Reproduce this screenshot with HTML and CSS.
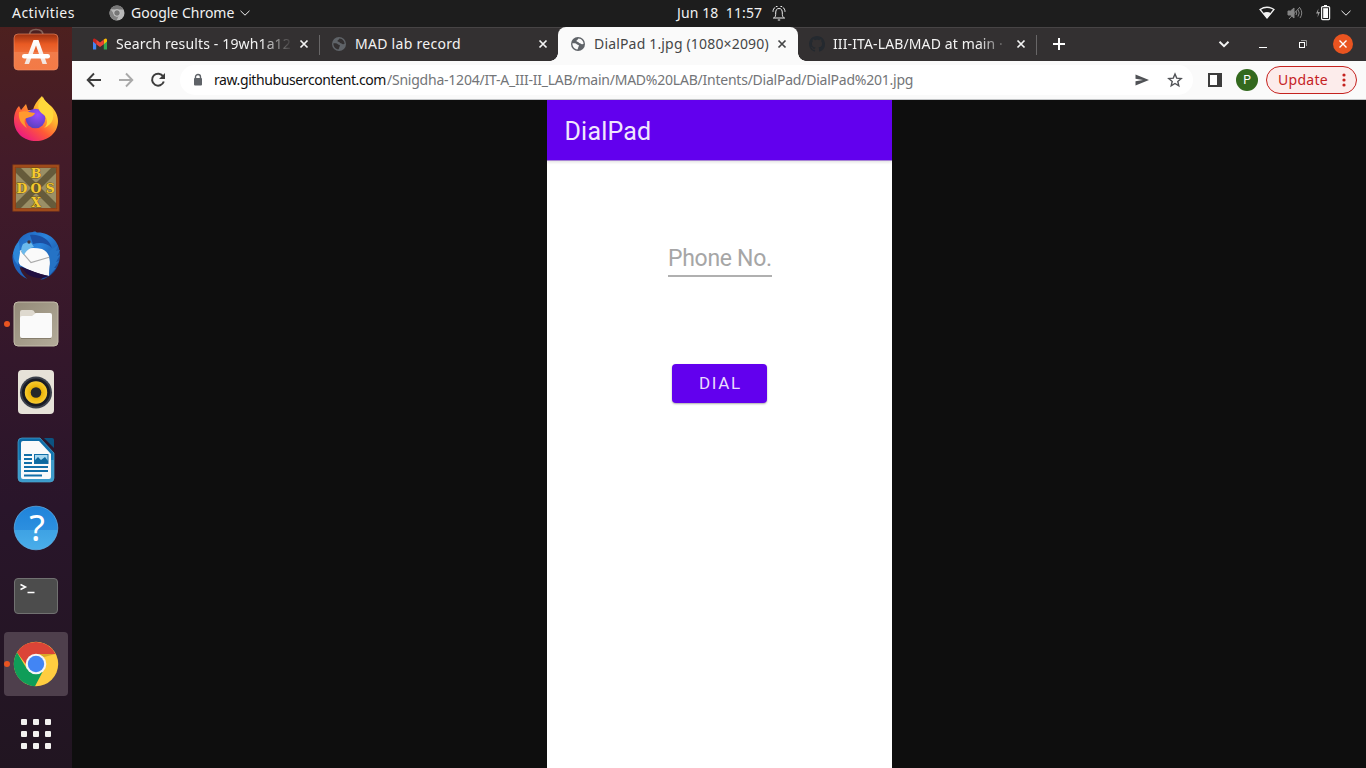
FILE: index.html
```html
<!DOCTYPE html>
<html lang="en">
<head>
<meta charset="utf-8">
<title>DialPad 1.jpg (1080×2090)</title>
<link rel="stylesheet" href="styles.css">
</head>
<body>
<svg width="0" height="0" class="defs">
  <defs>
    <linearGradient id="bag" x1="0" y1="0" x2="0" y2="1"><stop offset="0" stop-color="#9c3010"/><stop offset=".28" stop-color="#e95a23"/><stop offset=".5" stop-color="#ee6a35"/><stop offset=".51" stop-color="#f17c4a"/><stop offset="1" stop-color="#f37a46"/></linearGradient>
    <linearGradient id="letter" x1="0" y1="0" x2="0" y2="1"><stop offset="0" stop-color="#fff"/><stop offset="1" stop-color="#f3e4de"/></linearGradient>
    <linearGradient id="fox" x1="1" y1="0" x2=".2" y2="1"><stop offset="0" stop-color="#fff04a"/><stop offset=".4" stop-color="#ffb02e"/><stop offset=".65" stop-color="#ff5a36"/><stop offset="1" stop-color="#e8128b"/></linearGradient>
    <radialGradient id="foxglobe" cx=".6" cy=".3" r=".8"><stop offset="0" stop-color="#9a4bff"/><stop offset="1" stop-color="#5340b8"/></radialGradient>
    <linearGradient id="bird" x1="0" y1="0" x2="1" y2="1"><stop offset="0" stop-color="#1d5fb8"/><stop offset=".4" stop-color="#2a83dc"/><stop offset="1" stop-color="#123a83"/></linearGradient>
    <linearGradient id="folder" x1="0" y1="0" x2="1" y2="1"><stop offset="0" stop-color="#938a78"/><stop offset="1" stop-color="#b3ab99"/></linearGradient>
    <radialGradient id="cone"><stop offset="0" stop-color="#c99400"/><stop offset=".6" stop-color="#edb80f"/><stop offset="1" stop-color="#f8cb31"/></radialGradient>
    <linearGradient id="writer" x1="0" y1="0" x2="0" y2="1"><stop offset="0" stop-color="#0e6aa5"/><stop offset=".5" stop-color="#1478b2"/><stop offset=".51" stop-color="#3f9cca"/><stop offset="1" stop-color="#3b9bcb"/></linearGradient>
    <linearGradient id="help" x1="0" y1="0" x2="0" y2="1"><stop offset="0" stop-color="#1f83da"/><stop offset=".54" stop-color="#2c8fdf"/><stop offset=".55" stop-color="#3ea2e4"/><stop offset="1" stop-color="#4aaeea"/></linearGradient>
    <symbol id="close" viewBox="0 0 16 16"><path d="M4.500 4.500l7 7M11.500 4.500l-7 7" stroke="currentColor" stroke-width="1.700" fill="none"/></symbol>
    <symbol id="globe" viewBox="0 0 16 16"><circle cx="8" cy="8" r="7" fill="#5f6368"/><path class="land" d="M2.400 7.200h2.500c1.600 0 1.800 1.500 2.900 1.600 1.300.1 1.400 1 .8 1.800-.5.7-.2 1.600-1.200 2.800C4.500 13.200 2.200 10.500 2.400 7.200zM8.600 2.500c-1.200.6-.5 1.300-1.600 1.700-.9.3-.6 1.500.4 1.500 1.300.1 1.300 1.500 2.500 1.500 1 0 1.100.8 2 1.100.8.2 1.200-.2 1.700-.5C13.400 5 11.500 2.600 8.600 2.500z"/></symbol>
    <symbol id="chev" viewBox="0 0 12 12"><path d="M1.500 3.800L6 8.200l4.500-4.400" stroke="currentColor" fill="none"/></symbol>
  </defs>
</svg>

<header class="topbar">
  <div class="top-left">
    <span class="activities">Activities</span>
    <svg class="app-icon" width="16" height="16" viewBox="0 0 16 16"><circle cx="8" cy="8" r="7.500" fill="#b9b9b9"/><path d="M1.500 4.200A7.500 7.500 0 0 1 14.500 4.500H8z" fill="#777"/><path d="M1.500 4.200A7.500 7.500 0 0 0 7.500 15.500L10 10 5 9z" fill="#838383"/><circle cx="8" cy="8" r="3.300" fill="#777" stroke="#ccc" stroke-width="1"/></svg>
    <span class="app-name">Google Chrome</span>
    <svg class="app-chev" width="12" height="12"><use href="#chev"/></svg>
  </div>
  <div class="top-center">
    <span class="clock">Jun 18&nbsp; 11:57</span>
    <svg width="14" height="16" viewBox="0 0 14 16" fill="none" stroke="#eee"><path d="M2.500 12.500c1-1 1.200-2 1.200-4.500 0-3 1-4.500 3.300-4.500S10.300 5 10.300 8c0 2.500.2 3.500 1.200 4.500M1 13h12M5.800 15h2.400M3.300 2.200C1.800 3.200 1 4.800 1 6.800M10.700 2.200C12.200 3.200 13 4.800 13 6.800M4 1.500h1.500M8.500 1.500H10"/></svg>
  </div>
  <div class="top-right">
    <svg width="16" height="14" viewBox="0 0 16 14"><path d="M1 3.500Q8-1 15 3.500L8 12z" fill="none" stroke="#f2f2f2" stroke-width="1.300"/><path d="M4 7.200Q8 5 12 7.200L8 12z" fill="#f2f2f2"/></svg>
    <svg class="muted" width="16" height="14" viewBox="0 0 16 14" fill="none" stroke="#858585"><path d="M1 5h2.500L7 2v10L3.500 9H1z" fill="#858585"/><path d="M9 5q1.500 2 0 4M11 3.500q2.500 3.500 0 7M13 2q3.500 5 0 10M2 13L13 1"/></svg>
    <svg width="16" height="16" viewBox="0 0 16 16"><path d="M3.500 3.500L1 8.500h2l-.5 4L5 7H3z" fill="#999"/><path d="M9 0h3v2H9z" fill="#fff"/><rect x="6.600" y="1.600" width="8" height="13" rx="1" fill="none" stroke="#f2f2f2" stroke-width="1.200"/><path d="M8.200 3.200h4.800v9.800H8.200z" fill="#fff"/></svg>
    <svg class="sys-chev" width="12" height="12"><use href="#chev"/></svg>
  </div>
</header>

<div class="desktop">
  <nav class="dock">
    <div class="cell"><svg viewBox="0 0 64 64"><path d="M25.500 17v-3c0-4 2.500-5.500 6.500-5.500s7 1.500 7 5.500v3" transform="translate(0 1)" fill="none" stroke="#826158" stroke-width="1.600"/><rect x="10" y="14" width="44" height="36" rx="4" fill="url(#bag)" stroke="#f39269" stroke-width=".6"/><path d="M29.500 20h5l8.500 24h-4.500L32 25.500 25 44h-4.500z" fill="url(#letter)"/><rect x="18" y="34" width="28" height="4.600" rx="2.300" fill="#fff"/></svg></div>
    <div class="cell"><svg viewBox="0 0 64 64"><g transform="translate(0 -1)"><path d="M10 33c0-6 2-11 5-14l2 4 5-6 2 6h5c1-5 4-9 9-14 2 5 6 7 9 10 4 4 7 9 7 15 0 12-10 20-22 20S10 46 10 33z" fill="url(#fox)"/><circle cx="31.500" cy="31.500" r="9.800" fill="url(#foxglobe)"/><path d="M15 25c6-2 9 0 16 1-1 4-7 4-10 6-1 3 0 6 2 9-6-4-9-9-8-16z" fill="#ff9a2f"/><path d="M39 10c-6 6-7 13 1 18 4 4 4 10 0 13 9-3 12-13 7-21-2-3-6-5-8-10z" fill="#ffd83b"/></g></svg></div>
    <div class="cell"><svg viewBox="0 0 64 64"><path d="M9 9h46v46H9z" fill="#9a8f66"/><path d="M12 12l40 40M52 12L12 52" stroke="#665b3b" stroke-width="7"/><rect x="10.200" y="10.200" width="43.600" height="43.600" fill="none" stroke="#8f4016" stroke-width="3.400"/><rect x="10" y="10" width="44" height="44" fill="none" stroke="#b0571f" stroke-width="1"/><g class="dos"><text x="32" y="22">B</text><text x="17.800" y="36.500">D</text><text x="32" y="36.500">O</text><text x="46.300" y="36.500">S</text><text x="32" y="51">X</text></g></svg></div>
    <div class="cell"><svg viewBox="0 0 64 64"><path d="M15 16c3-5 9-8 14-8 2-1 3 0 4 .5C46 8 56 18 56 31c0 13-9 23-20 25 3-2 4-3 5-5l-25-8c-5-8-5-19-1-27z" fill="url(#bird)"/><path d="M15 27c6-3 15-4 23-2 5 2 8 7 8 13l-1 14c-10-2-20-5-29-11-3-4-3-10-1-14z" fill="#fafafa"/><path d="M17 27l10 11.500L46 33" fill="none" stroke="#aaa" stroke-width="1.100"/><path d="M16 42c9 4 19 8 29 10-6 3-15 3-22-2z" fill="#210f40"/><path d="M8.500 30c-1 11 5 21 15 25-5-4-8-9-8-15z" fill="#1f62bb"/><path d="M9 29c1-5 3-9 6-12l1 12-2 12c-3-3-5-7-5-12z" fill="#2c86d8"/><path d="M19 20c-2 4-3 8 1 11 2-4 5-7 10-8l-4-6z" fill="#6bb9ec"/><circle cx="25" cy="18" r="1.700" fill="#40343f"/><path d="M26 11c10-1 19 4 22 13-5-5-12-6-19-4z" fill="#1b4fa3"/><path d="M45 27l9-6-2 6 4-1-3 6 3-1-4 7 3-1-5 7 2 0-7 8 1-12z" fill="#2573c6"/></svg></div>
    <div class="cell running"><svg viewBox="0 0 64 64"><rect x="10" y="10" width="44" height="44" rx="4" fill="url(#folder)" stroke="#c4bdaa"/><path d="M16 28v-8q0-2 2-2h10q2 0 3 3h15v7z" fill="#ded9cf"/><path d="M16 26q0-2 2-2h10l4-3h14q2 0 2 2v21q0 2-2 2H18q-2 0-2-2z" fill="#fafafa"/><path d="M17 46.500h30" stroke="#7d7565" stroke-width=".8"/></svg></div>
    <div class="cell"><svg viewBox="0 0 64 64"><rect x="14" y="10" width="36" height="44" rx="4" fill="#e6e2d8"/><circle cx="32" cy="32.500" r="16" fill="#3c414b"/><circle cx="32" cy="32.500" r="12.500" fill="none" stroke="#191c24" stroke-width="3"/><circle cx="32" cy="32.500" r="11.200" fill="url(#cone)"/><circle cx="32" cy="32.500" r="5.300" fill="#24272a"/></svg></div>
    <div class="cell"><svg viewBox="0 0 64 64"><path d="M18 10h18l14 15v25q0 4-4 4H18q-4 0-4-4V14q0-4 4-4z" fill="url(#writer)" stroke="#4ba5cf" stroke-width=".7"/><path d="M17 15q0-2 2-2h16l12 13v23q0 2-2 2H19q-2 0-2-2z" fill="#fafafa"/><path d="M40 10h8q2 0 2 2v8z" fill="#0c5381"/><path d="M20 27h8M20 31h8M20 35h8M20 39h24M20 43h24M20 47.500h18" stroke="#126fa8" stroke-width="2"/><rect x="30.500" y="26.500" width="13.500" height="9" fill="#a8d8f0" stroke="#126fa8"/><path d="M31 35v-3l3-3 3 3 4-3 3 4v2z" fill="#0d699f"/></svg></div>
    <div class="cell"><svg viewBox="0 0 64 64"><circle cx="32" cy="32" r="21.800" fill="url(#help)" stroke="#63b4ed" stroke-width=".7"/><text class="question" x="33" y="45">?</text></svg></div>
    <div class="cell"><svg viewBox="0 0 64 64"><rect x="10.500" y="14.500" width="43" height="35" rx="3.500" fill="#4c4c4c" stroke="#717171"/><path d="M16.500 20.500l5 2.500-5 2.500M23.500 28.500h7" fill="none" stroke="#fff" stroke-width="1.500"/></svg></div>
    <div class="cell running current"><svg viewBox="0 0 64 64"><circle cx="32" cy="32" r="22.200" fill="#ffcd40"/><path d="M13 20.500A22.200 22.200 0 0 1 51.500 22H32L22.500 33z" fill="#db4437"/><path d="M13 20.500A22.200 22.200 0 0 0 31 54.200L39 39 23 37z" fill="#0f9d58"/><path d="M32 22h19.500l-15 4z" fill="#dba728"/><circle cx="32" cy="32" r="10.300" fill="#f5f5f5"/><circle cx="32" cy="32" r="8.200" fill="#4285f4"/></svg></div>
    <div class="cell apps"><i></i><i></i><i></i><i></i><i></i><i></i><i></i><i></i><i></i></div>
  </nav>

  <main class="browser">
    <div class="tabstrip">
      <div class="tab"><svg class="fav" viewBox="0 0 16 16"><path d="M1 4v9.500h3.200V7L1 4z" fill="#4285f4"/><path d="M15 4v9.500h-3.200V7L15 4z" fill="#34a853"/><path d="M11.800 3.500L13 2.700q2-.8 2 1.300v1.600l-3.200 2.600z" fill="#fbbc04"/><path d="M4.200 3.500L8 6.500l3.800-3v4.700L8 11 4.200 8.200z" fill="#ea4335"/><path d="M4.200 3.500L3 2.700Q1 1.900 1 4v1.600l3.200 2.600z" fill="#c5221f"/></svg><span class="title t1 fade">Search results - 19wh1a12</span><svg class="x"><use href="#close"/></svg></div>
      <div class="tab lined"><svg class="fav dark"><use href="#globe"/></svg><span class="title t2">MAD lab record</span><svg class="x"><use href="#close"/></svg></div>
      <div class="tab active"><svg class="fav light"><use href="#globe"/></svg><span class="title t3">DialPad 1.jpg (1080×2090)</span><svg class="x"><use href="#close"/></svg></div>
      <div class="tab"><svg class="fav" viewBox="0 0 16 16"><path fill="#24292f" d="M8 0C3.580 0 0 3.580 0 8c0 3.540 2.290 6.530 5.470 7.590.4.070.55-.17.55-.38 0-.19-.01-.82-.01-1.490-2.010.37-2.530-.49-2.690-.94-.09-.23-.48-.94-.82-1.130-.28-.15-.68-.52-.01-.53.63-.01 1.080.58 1.230.82.72 1.210 1.870.87 2.330.66.070-.52.28-.87.51-1.070-1.780-.2-3.640-.89-3.640-3.950 0-.87.31-1.590.82-2.150-.08-.2-.36-1.020.08-2.120 0 0 .67-.21 2.200.82.64-.18 1.320-.27 2-.27s1.360.09 2 .27c1.530-1.040 2.200-.82 2.200-.82.44 1.100.16 1.920.08 2.120.51.56.82 1.270.82 2.150 0 3.070-1.870 3.750-3.650 3.950.29.25.54.73.54 1.480 0 1.070-.01 1.930-.01 2.200 0 .21.15.46.55.38A8.010 8.010 0 0 0 16 8c0-4.420-3.580-8-8-8z"/></svg><span class="title t4 fade">III-ITA-LAB/MAD at main ·</span><svg class="x"><use href="#close"/></svg></div>
      <div class="new-tab"><svg width="14" height="14" viewBox="0 0 14 14"><path d="M7 1v12M1 7h12" stroke="#fff" stroke-width="2"/></svg></div>
      <div class="window-controls">
        <svg class="tab-search" width="12" height="12"><use href="#chev"/></svg>
        <svg width="20" height="20" viewBox="0 0 20 20"><path d="M6 13.500h8" stroke="#fff"/></svg>
        <svg width="20" height="20" viewBox="0 0 20 20" fill="none"><path d="M8 6.500h5.500V12" stroke="#999"/><rect x="6.500" y="8.500" width="5" height="5" stroke="#fff"/></svg>
        <svg width="20" height="20" viewBox="0 0 20 20"><circle cx="10" cy="10" r="10" fill="#e95420"/><path d="M6.500 6.500l7 7M13.500 6.500l-7 7" stroke="#fff" stroke-width="1.400"/></svg>
      </div>
    </div>

    <div class="toolbar">
      <div class="nav">
        <svg width="16" height="16" viewBox="0 0 16 16" fill="none" stroke="#3c3c3c" stroke-width="1.900"><path d="M15 8H2M8 1.500L1.700 8 8 14.500"/></svg>
        <svg width="16" height="16" viewBox="0 0 16 16" fill="none" stroke="#a9a9a9" stroke-width="1.900"><path d="M1 8h13M8 1.500L14.300 8 8 14.500"/></svg>
        <svg width="16" height="16" viewBox="0 0 16 16"><path d="M13.200 4.500A6 6 0 1 0 13.800 9.500" fill="none" stroke="#3c3c3c" stroke-width="2"/><path d="M15 1v6H9z" fill="#3c3c3c"/></svg>
      </div>
      <div class="omnibox">
        <svg width="10" height="14" viewBox="0 0 10 14"><path d="M2.500 6V4a2.500 2.500 0 0 1 5 0v2" fill="none" stroke="#5f6368" stroke-width="1.400"/><rect x="1" y="5" width="8" height="7.500" rx="1" fill="#5f6368"/></svg>
        <span class="url"><span class="host">raw.githubusercontent.com</span><span class="path">/Snigdha-1204/IT-A_III-II_LAB/main/MAD%20LAB/Intents/DialPad/DialPad%201.jpg</span></span>
        <svg class="send" width="16" height="16" viewBox="0 0 16 16"><path d="M1.500 2.500L15 8 1.500 13.500V9.300L9 8 1.500 6.700z" fill="#505256"/></svg>
        <svg class="star" width="16" height="16" viewBox="0 0 16 16"><path d="M8 2l1.700 4.100 4.500.4-3.400 2.900 1 4.400L8 11.500l-3.800 2.300 1-4.400-3.400-2.900 4.500-.4z" fill="none" stroke="#505256" stroke-width="1.400"/></svg>
      </div>
      <svg class="side-panel" width="14" height="14" viewBox="0 0 14 14"><path d="M0 0h14v14H0z" fill="#3c3c3c"/><path d="M2 2h7v10H2z" fill="#fff"/></svg>
      <span class="avatar">P</span>
      <span class="update"><span>Update</span><svg width="4" height="14" viewBox="0 0 4 14" fill="#c5221f"><circle cx="2" cy="2" r="1.600"/><circle cx="2" cy="7" r="1.600"/><circle cx="2" cy="12" r="1.600"/></svg></span>
    </div>

    <div class="viewer">
      <div class="phone">
        <div class="appbar"><span>DialPad</span></div>
        <div class="field">Phone No.</div>
        <div class="dial"><span>DIAL</span></div>
      </div>
    </div>
  </main>
</div>
</body>
</html>
```
FILE: styles.css
```css
* { box-sizing: border-box; }
body { margin: 0; width: 1366px; height: 768px; overflow: hidden; display: flex; flex-direction: column; background: #0e0e0e; font: 14px/20px "Noto Sans", "Open Sans", sans-serif; }
svg { display: block; flex: none; }
span { white-space: pre; }
.defs { position: absolute; }

.topbar { flex: none; height: 27px; background: #1d1d1d; color: #f2f2f2; display: grid; grid-template-columns: 677px 1fr auto; align-items: center; }
.top-left, .top-center, .top-right { display: flex; align-items: center; }
.top-left { padding-left: 12px; }
.topbar span { padding-bottom: 2px; }
.topbar svg { margin-bottom: 1px; }
.activities { width: 63px; letter-spacing: .45px; }
.app-icon { margin-left: 34px; }
.app-name { width: 104px; margin-left: 6px; }
.app-chev { margin-left: 4px; }
.clock { width: 86px; margin-right: 9px; letter-spacing: .1px; }
.top-right { gap: 12px; padding-right: 14px; }
.sys-chev { margin-left: -3px; }

.desktop { flex: 1; min-height: 0; display: flex; }
.dock { width: 72px; overflow: hidden; display: flex; flex-direction: column; align-items: center; gap: 4px; background: linear-gradient(#4d201f, #431b29 18%, #33172b 45%, #29152a 65%, #211521); }
.cell { flex: none; width: 64px; height: 64px; border-radius: 4px; display: flex; position: relative; }
.cell:first-child { margin-top: -7px; }
.cell svg { width: 64px; height: 64px; }
.running::before { content: ""; position: absolute; left: 0; top: 29px; width: 6px; height: 6px; border-radius: 50%; background: #e95420; }
.current { background: #4e3f4c; }
.apps { margin-top: 2px; display: grid; grid-template-columns: repeat(3, 6px); grid-auto-rows: 6px; gap: 6px; place-content: center; }
.apps i { background: #f3f2f0; border-radius: 1px; }
.dos text { font: bold 12.500px "DejaVu Serif", serif; fill: #f5ca30; stroke: #6b500a; stroke-width: .8; paint-order: stroke; text-anchor: middle; }
.question { font: 36px "Noto Sans", sans-serif; fill: #fff; text-anchor: middle; }

.browser { flex: 1; min-width: 0; display: flex; flex-direction: column; }
.tabstrip { flex: none; height: 34px; padding-left: 8px; display: flex; background: #333031; border-top: 1px solid #474445; color: #f3f3f3; }
.tab { flex: none; width: 239px; display: flex; align-items: center; padding: 0 7px 1px 12px; position: relative; }
.fav { width: 16px; height: 16px; margin-right: 8px; }
.dark .land, .dark { fill: #333031; }
.light { fill: #fafafa; }
.title { flex: 1; min-width: 0; overflow: hidden; padding-bottom: 1px; }
.t1 { letter-spacing: .14px; }
.t2 { letter-spacing: .28px; }
.t3 { letter-spacing: .17px; }
.t4 { letter-spacing: .12px; }
.fade { -webkit-mask-image: linear-gradient(to right, #000 145px, transparent 177px); mask-image: linear-gradient(to right, #000 145px, transparent 177px); }
.x { width: 16px; height: 16px; margin-left: 4px; }
.lined::before, .new-tab::before { content: ""; position: absolute; left: 0; top: 7px; width: 1px; height: 20px; background: #686667; }
.active { background: #fafafa; color: #454647; width: 240px; margin: -1px -1px 0 0; padding: 0 8px 0 12px; border-radius: 8px 8px 0 0; }
.active::before, .active::after { content: ""; position: absolute; bottom: 0; width: 8px; height: 8px; }
.active::before { left: -8px; background: radial-gradient(circle at 0 0, #333031 7.500px, #fafafa 8px); }
.active::after { right: -8px; background: radial-gradient(circle at 100% 0, #333031 7.500px, #fafafa 8px); }
.new-tab { width: 46px; display: flex; align-items: center; justify-content: center; position: relative; padding-bottom: 1px; }
.window-controls { margin-left: auto; display: flex; align-items: center; gap: 20px; padding: 0 13px 1px 0; }
.tab-search { margin-right: 3px; stroke-width: 2; }

.toolbar { flex: none; height: 39px; display: flex; align-items: center; background: #fafafa; border-bottom: 1px solid #c3c5c7; }
.nav { width: 108px; padding-left: 14px; display: flex; gap: 16px; }
.omnibox { width: 1013px; height: 30px; border-radius: 15px; background: #fff; display: flex; align-items: center; padding: 0 10px 0 13px; }
.url { flex: 1; display: flex; padding-left: 11px; }
.host { color: #111; width: 173px; letter-spacing: -.4px; }
.path { color: #737578; letter-spacing: -.23px; }
.star { margin-left: 17px; }
.side-panel { margin-left: 15px; }
.avatar { width: 22px; height: 22px; margin-left: 14px; border-radius: 50%; background: #33691e; color: #fff; font: 12px/22px Roboto, sans-serif; text-align: center; }
.update { width: 91px; height: 28px; margin-left: 8px; border: 1px solid #c5221f; border-radius: 14px; background: #fceceb; color: #c5221f; display: flex; align-items: center; justify-content: space-between; padding: 0 10px 0 11px; letter-spacing: .3px; }

.viewer { flex: 1; background: #0e0e0e; display: flex; justify-content: center; padding-left: 1px; }
.phone { width: 345px; overflow: hidden; background: #fff; display: flex; flex-direction: column; align-items: center; font-family: Roboto, sans-serif; }
.appbar { align-self: stretch; height: 60px; padding: 3px 0 0 17.500px; display: flex; align-items: center; background: #6200ee; color: #f0e6fd; font-size: 25px; letter-spacing: .2px; box-shadow: 0 1px 0 #a883d5, 0 2px 3px #ddd; }
.field { width: 104px; height: 35px; margin: 82px 0 0 1px; border-bottom: 2px solid #b0b0b0; color: #a6a6a6; font-size: 23px; letter-spacing: -.3px; line-height: 34px; white-space: pre; }
.dial { width: 95px; height: 39px; margin-top: 86.500px; border-radius: 4px; background: #6200ee; color: #eadcfd; box-shadow: 0 1px 2px #aaa; font-size: 17px; letter-spacing: 1.700px; display: flex; align-items: center; justify-content: center; padding-left: 2px; }
```
